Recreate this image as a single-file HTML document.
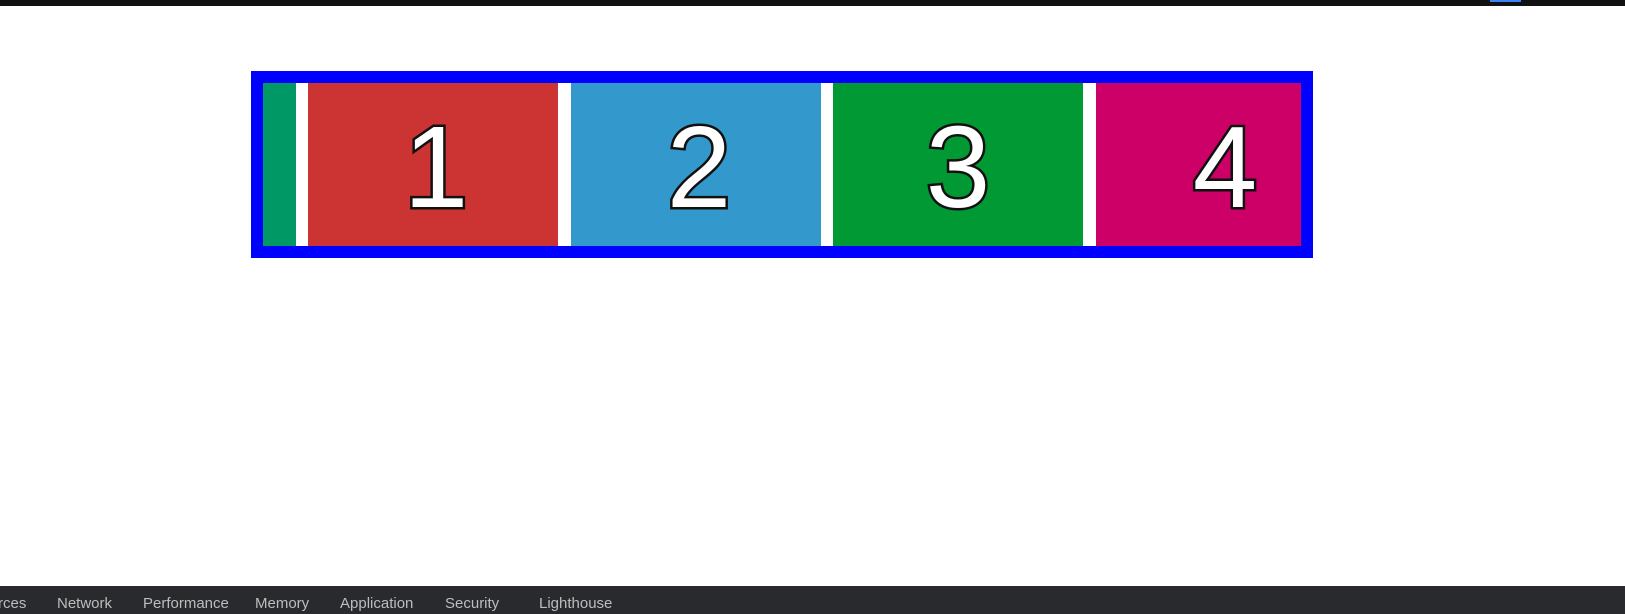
<!DOCTYPE html>
<html><head><style>
html,body{margin:0;padding:0;width:1625px;height:614px;overflow:hidden;background:#fff;position:relative;font-family:"Liberation Sans",Arial,sans-serif}
.top{position:absolute;left:0;top:0;width:1625px;height:6px;background:#111}
.ind{position:absolute;left:1490px;top:0;width:31px;height:2px;background:#3b82f6}
.box{position:absolute;left:251px;top:71px;width:1038px;height:163px;border:12px solid #00f;overflow:hidden;background:#fff}
.s{position:absolute;top:0;height:163px;width:250px;color:#fff;font-size:116px;line-height:168px;text-align:center;-webkit-text-stroke:5px #111;paint-order:stroke fill}
.bot{position:absolute;left:0;top:586px;width:1625px;height:28px;background:#292a2d;color:#bdbdbd;font-size:15px}
.bot span{position:absolute;top:9px}
</style></head><body>
<div class="top"><div class="ind"></div></div>
<div class="box">
<div class="s" style="left:-217px;background:#009966"></div>
<div class="s" style="left:45px;background:#cc3333;text-indent:6px">1</div>
<div class="s" style="left:308px;background:#3399cc;text-indent:6px">2</div>
<div class="s" style="left:570px;background:#009933">3</div>
<div class="s" style="left:833px;background:#cc0066;text-indent:8px">4</div>
</div>
<div class="bot">
<span style="left:-2px">rces</span><span style="left:57px">Network</span><span style="left:143px">Performance</span><span style="left:255px">Memory</span><span style="left:340px">Application</span><span style="left:445px">Security</span><span style="left:539px">Lighthouse</span>
</div>
</body></html>
